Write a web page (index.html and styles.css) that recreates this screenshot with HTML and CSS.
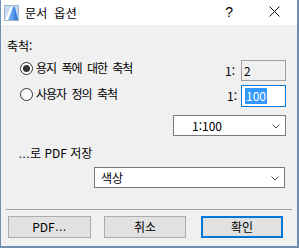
FILE: index.html
```html
<!DOCTYPE html>
<html lang="ko">
<head>
<meta charset="utf-8">
<title>문서 옵션</title>
<link rel="stylesheet" href="styles.css">
</head>
<body>
<div class="window">
  <div class="titlebar">
    <svg class="app-icon" width="15" height="16" viewBox="0 0 15 16">
      <defs>
        <linearGradient id="g" x1="0" y1="0" x2="1" y2="0">
          <stop offset="0" stop-color="#8cc4f8"/>
          <stop offset="1" stop-color="#1f6fd8"/>
        </linearGradient>
      </defs>
      <rect x="0.5" y="0.5" width="14" height="15" fill="#c9dbf0" stroke="#9fb3cb"/>
      <polygon points="1,15 7,2 9,2 4,15" fill="#ffffff"/>
      <polygon points="4,15 9,2 11,2 14,15" fill="url(#g)"/>
    </svg>
    <span class="title">문서 옵션</span>
    <span class="help">?</span>
    <svg class="close" width="11" height="11" viewBox="0 0 11 11">
      <path d="M0.5 0.5 L10.5 10.5 M10.5 0.5 L0.5 10.5" stroke="#111" stroke-width="1" fill="none"/>
    </svg>
  </div>
  <div class="content">
    <div class="scale-label">축척:</div>
    <div class="radio-row row1">
      <span class="radio checked"></span>
      <span class="radio-text">용지 폭에 대한 축척</span>
      <span class="ratio ratio1">1:</span>
      <span class="field disabled">2</span>
    </div>
    <div class="radio-row row2">
      <span class="radio"></span>
      <span class="radio-text">사용자 정의 축척</span>
      <span class="ratio ratio2">1:</span>
      <span class="field focused"><span class="sel">100</span></span>
    </div>
    <div class="select select-scale">
      <span class="select-text">1:100</span>
      <svg class="chev" width="8" height="5" viewBox="0 0 8 5"><polyline points="0.5,0.5 4,4 7.5,0.5" fill="none" stroke="#555" stroke-width="1"/></svg>
    </div>
    <div class="pdf-label"><span class="ell">…</span>로 PDF 저장</div>
    <div class="select select-color">
      <span class="select-text">색상</span>
      <svg class="chev" width="8" height="5" viewBox="0 0 8 5"><polyline points="0.5,0.5 4,4 7.5,0.5" fill="none" stroke="#555" stroke-width="1"/></svg>
    </div>
    <div class="separator"></div>
    <div class="buttons">
      <div class="btn btn-pdf">PDF<span class="ell">…</span></div>
      <div class="btn btn-cancel">취소</div>
      <div class="btn btn-ok">확인</div>
    </div>
  </div>
</div>
</body>
</html>
```
FILE: styles.css
```css
html, body {
  margin: 0;
  padding: 0;
  background: #f0f0f0;
}
.window {
  width: 299px;
  height: 248px;
  box-sizing: border-box;
  border-left: 1px solid #6f8fb2;
  border-right: 2px solid #6f8fb2;
  border-bottom: 2px solid #6f8fb2;
  background: #f0f0f0;
  font-family: "Noto Sans CJK KR", "Noto Sans", sans-serif;
  font-size: 12px;
  color: #000;
  overflow: hidden;
}
.titlebar {
  height: 25px;
  background: #fff;
  display: flex;
  align-items: center;
}
.app-icon {
  margin-left: 3px;
  margin-top: 1px;
  flex: none;
}
.title {
  margin-left: 6px;
  font-size: 12px;
  word-spacing: 3px;
  letter-spacing: 0.3px;
  line-height: 16px;
}
.help {
  margin-left: auto;
  font-family: "Liberation Sans", sans-serif;
  font-size: 14px;
  line-height: 16px;
  margin-top: -1px;
}
.close {
  margin-left: 36px;
  margin-right: 17px;
  margin-top: -2px;
  flex: none;
}
.content {
  display: flex;
  flex-direction: column;
}
.scale-label {
  margin-top: 13px;
  height: 16px;
  line-height: 16px;
  padding-left: 6px;
}
.radio-row {
  display: flex;
  align-items: flex-start;
  height: 22px;
}
.row1 { margin-top: 6px; }
.row2 { margin-top: 3px; }
.radio {
  margin-left: 19px;
  width: 13px;
  height: 13px;
  box-sizing: border-box;
  border: 1px solid #333;
  border-radius: 50%;
  background: #fff;
  flex: none;
  display: flex;
  align-items: center;
  justify-content: center;
}
.row1 .radio { margin-top: 2px; }
.row2 .radio { margin-top: 3px; }
.radio.checked::after {
  content: "";
  width: 7px;
  height: 7px;
  border-radius: 50%;
  background: #333;
}
.radio-text {
  margin-left: 3px;
  line-height: 16px;
  letter-spacing: -1px;
  word-spacing: 3px;
}
.row1 .radio-text { margin-top: 0px; }
.row2 .radio-text { margin-top: 1px; }
.ratio {
  margin-left: auto;
  line-height: 22px;
}
.ratio1 { margin-right: 6px; }
.ratio2 { margin-right: 4px; }
.field {
  width: 45px;
  height: 22px;
  box-sizing: border-box;
  margin-right: 11px;
  flex: none;
  line-height: 20px;
  padding-left: 2px;
}
.field.disabled {
  border: 1px solid #a0a0a0;
  background: #f0f0f0;
  height: 21px;
  line-height: 19px;
}
.field.focused {
  border: 1px solid #0078d7;
  background: #fff;
  padding-left: 3px;
  padding-top: 2px;
}
.sel {
  display: inline-block;
  background: #3399ff;
  color: #fff;
  line-height: 16px;
  height: 16px;
  padding: 0 1px;
  vertical-align: top;
}
.select {
  height: 21px;
  box-sizing: border-box;
  border: 1px solid #7a7a7a;
  background: #fff;
  display: flex;
  align-items: center;
}
.select-text {
  line-height: 16px;
}
.chev {
  margin-left: auto;
  margin-right: 5px;
  margin-top: 2px;
  flex: none;
}
.select-scale {
  margin-top: 8px;
  margin-left: 172px;
  width: 113px;
  padding-left: 18px;
}
.ell {
  font-family: "Liberation Sans", sans-serif;
  font-size: 12px;
}
.pdf-label {
  margin-top: 9px;
  height: 16px;
  line-height: 16px;
  padding-left: 17px;
}
.select-color {
  margin-top: 6px;
  margin-left: 93px;
  width: 191px;
  padding-left: 6px;
}
.separator {
  margin-top: 21px;
  margin-left: 5px;
  width: 286px;
  height: 1px;
  background: #a0a0a0;
}
.buttons {
  margin-top: 6px;
  display: flex;
  height: 22px;
}
.btn {
  height: 22px;
  box-sizing: border-box;
  border: 1px solid #adadad;
  background: #e1e1e1;
  display: flex;
  align-items: center;
  justify-content: center;
  line-height: 16px;
}
.btn-pdf { margin-left: 7px; width: 83px; }
.btn-cancel { margin-left: 13px; width: 82px; }
.btn-ok {
  margin-left: 15px;
  width: 82px;
  border: 2px solid #0078d7;
}
```
